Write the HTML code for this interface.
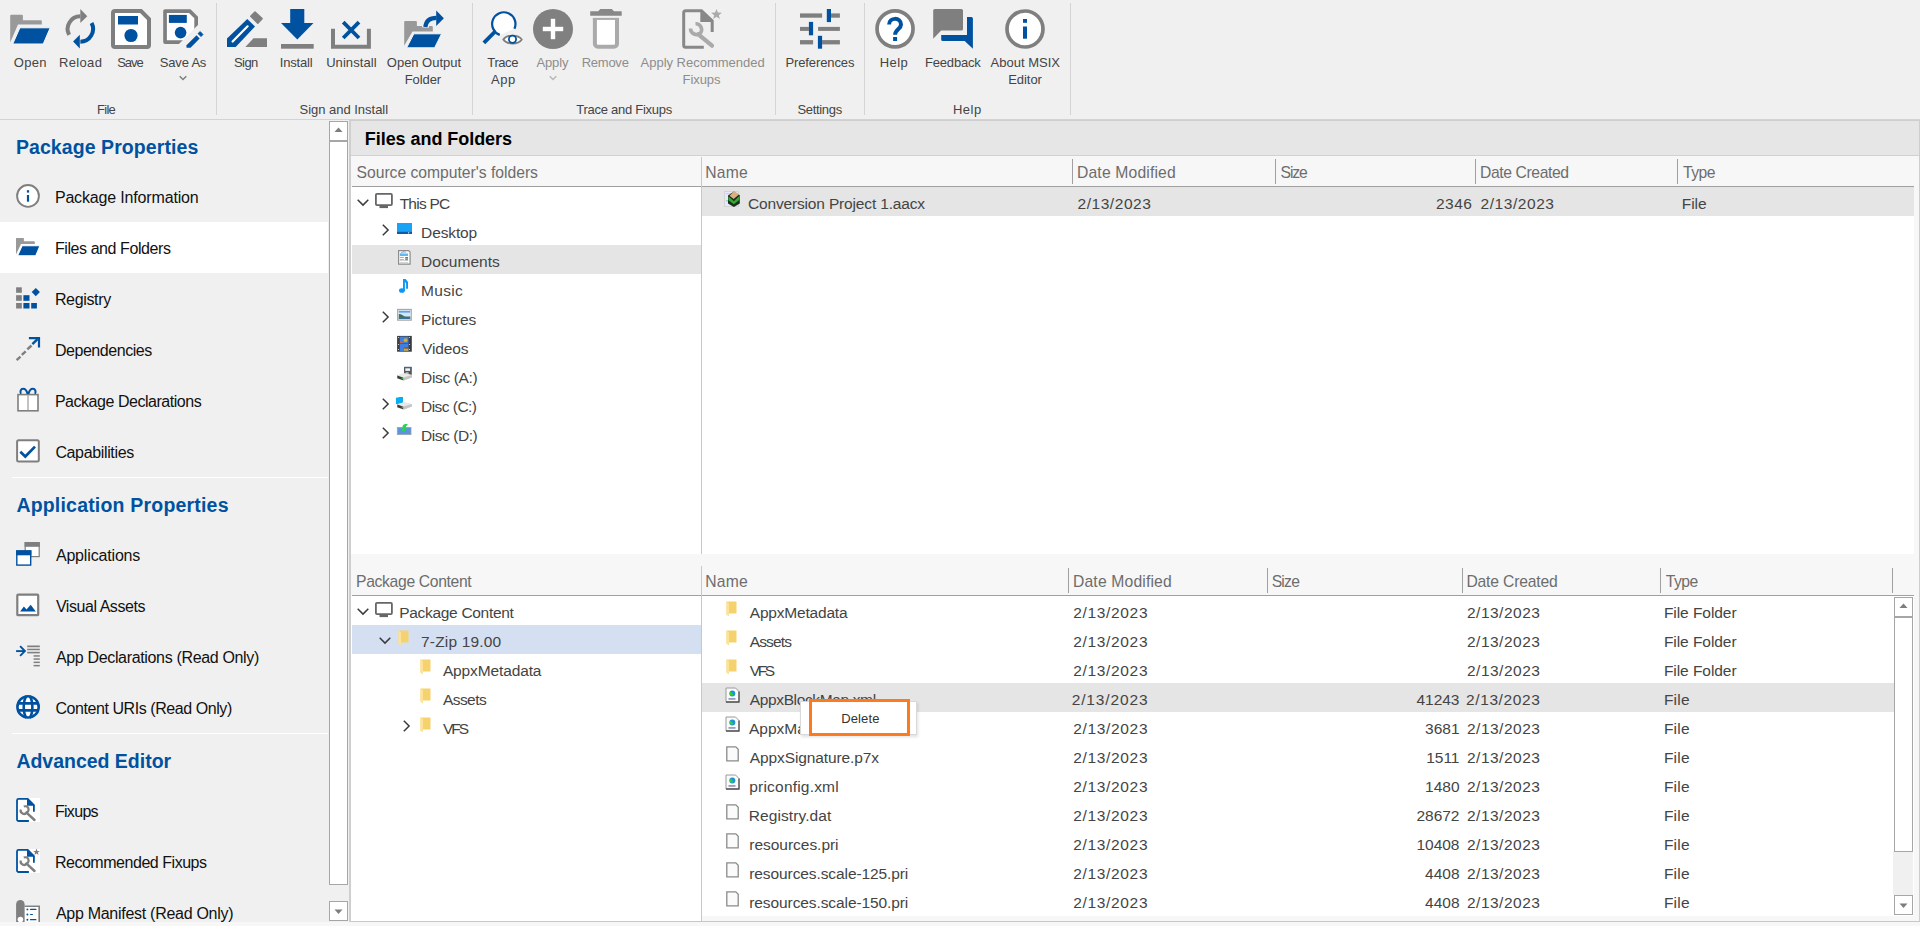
<!DOCTYPE html><html><head><meta charset="utf-8"><style>
html,body{margin:0;padding:0}
body{width:1920px;height:926px;overflow:hidden;position:relative;background:#f0f0f0;font-family:"Liberation Sans",sans-serif}
.t{position:absolute;white-space:nowrap;line-height:20px}
.r{position:absolute;display:block}
</style></head><body>
<div class="r" style="left:216px;top:3px;width:1px;height:112px;background:#d4d4d4;"></div>
<div class="r" style="left:472px;top:3px;width:1px;height:112px;background:#d4d4d4;"></div>
<div class="r" style="left:775px;top:3px;width:1px;height:112px;background:#d4d4d4;"></div>
<div class="r" style="left:864px;top:3px;width:1px;height:112px;background:#d4d4d4;"></div>
<div class="r" style="left:1070px;top:3px;width:1px;height:112px;background:#d4d4d4;"></div>
<div class="r" style="left:0px;top:119px;width:1920px;height:1px;background:#d3d3d3;"></div>
<div class="r" style="left:349px;top:120px;width:1571px;height:1px;background:#cecece;"></div>
<div class="t" id="t0" style="left:13.79px;top:53px;font-size:13px;color:#444;font-weight:normal;letter-spacing:0.333px;">Open</div>
<div class="t" id="t1" style="left:59.00px;top:53px;font-size:13px;color:#444;font-weight:normal;letter-spacing:0.340px;">Reload</div>
<div class="t" id="t2" style="left:117.22px;top:53px;font-size:13px;color:#444;font-weight:normal;letter-spacing:-1.033px;">Save</div>
<div class="t" id="t3" style="left:159.87px;top:53px;font-size:13px;color:#444;font-weight:normal;letter-spacing:-0.200px;">Save As</div>
<div class="t" id="t4" style="left:234.02px;top:53px;font-size:13px;color:#444;font-weight:normal;letter-spacing:-0.567px;">Sign</div>
<div class="t" id="t5" style="left:279.81px;top:53px;font-size:13px;color:#444;font-weight:normal;letter-spacing:-0.183px;">Install</div>
<div class="t" id="t6" style="left:326.13px;top:53px;font-size:13px;color:#444;font-weight:normal;letter-spacing:0.075px;">Uninstall</div>
<div class="t" id="t7" style="left:386.86px;top:53px;font-size:13px;color:#444;font-weight:normal;letter-spacing:-0.030px;">Open Output</div>
<div class="t" id="t8" style="left:404.74px;top:70px;font-size:13px;color:#444;font-weight:normal;letter-spacing:-0.080px;">Folder</div>
<div class="t" id="t9" style="left:487.36px;top:53px;font-size:13px;color:#444;font-weight:normal;letter-spacing:-0.425px;">Trace</div>
<div class="t" id="t10" style="left:491.11px;top:70px;font-size:13px;color:#444;font-weight:normal;letter-spacing:0.450px;">App</div>
<div class="t" id="t11" style="left:536.41px;top:53px;font-size:13px;color:#8d8d8d;font-weight:normal;letter-spacing:-0.100px;">Apply</div>
<div class="t" id="t12" style="left:581.66px;top:53px;font-size:13px;color:#8d8d8d;font-weight:normal;letter-spacing:-0.240px;">Remove</div>
<div class="t" id="t13" style="left:640.57px;top:53px;font-size:13px;color:#8d8d8d;font-weight:normal;letter-spacing:-0.012px;">Apply Recommended</div>
<div class="t" id="t14" style="left:682.62px;top:70px;font-size:13px;color:#8d8d8d;font-weight:normal;letter-spacing:-0.100px;">Fixups</div>
<div class="t" id="t15" style="left:785.38px;top:53px;font-size:13px;color:#444;font-weight:normal;letter-spacing:-0.100px;">Preferences</div>
<div class="t" id="t16" style="left:879.80px;top:53px;font-size:13px;color:#444;font-weight:normal;letter-spacing:0.433px;">Help</div>
<div class="t" id="t17" style="left:925.07px;top:53px;font-size:13px;color:#444;font-weight:normal;letter-spacing:-0.200px;">Feedback</div>
<div class="t" id="t18" style="left:990.49px;top:53px;font-size:13px;color:#444;font-weight:normal;letter-spacing:0.011px;">About MSIX</div>
<div class="t" id="t19" style="left:1008.16px;top:70px;font-size:13px;color:#444;font-weight:normal;letter-spacing:-0.040px;">Editor</div>
<div class="t" id="t20" style="left:96.97px;top:100px;font-size:13px;color:#444;font-weight:normal;letter-spacing:-0.700px;">File</div>
<div class="t" id="t21" style="left:299.52px;top:100px;font-size:13px;color:#444;font-weight:normal;letter-spacing:-0.020px;">Sign and Install</div>
<div class="t" id="t22" style="left:576.35px;top:100px;font-size:13px;color:#444;font-weight:normal;letter-spacing:-0.273px;">Trace and Fixups</div>
<div class="t" id="t23" style="left:797.43px;top:100px;font-size:13px;color:#444;font-weight:normal;letter-spacing:-0.314px;">Settings</div>
<div class="t" id="t24" style="left:952.90px;top:100px;font-size:13px;color:#444;font-weight:normal;letter-spacing:0.500px;">Help</div>
<svg class="r" style="left:179px;top:74.5px" width="8" height="6" viewBox="0 0 8 6"><path d="M0.7 1.2 L4 4.5 L7.3 1.2" fill="none" stroke="#808080" stroke-width="1.5"/></svg>
<svg class="r" style="left:549px;top:74.5px" width="8" height="6" viewBox="0 0 8 6"><path d="M0.7 1.2 L4 4.5 L7.3 1.2" fill="none" stroke="#b8b8b8" stroke-width="1.5"/></svg>
<svg class="r" style="left:6px;top:6px" width="50" height="46" viewBox="0 0 50 46"><path d="M4.2 9.8 Q4.2 8.8 5.2 8.8 H15.9 Q16.9 8.8 16.9 9.8 V14.2 H34.8 Q35.8 14.2 35.8 15.2 V18.6 H12 L4.2 36.5 Z" fill="#999"/>
<path d="M13.9 21.8 H44.2 L37.2 38 H6.7 Z" fill="#0052a0" stroke="#f7f7f7" stroke-width="1" stroke-linejoin="round"/></svg>
<svg class="r" style="left:56px;top:6px" width="50" height="46" viewBox="0 0 50 46"><path d="M13.14 28.91 A12.7 12.7 0 0 1 24.35 10.25" fill="none" stroke="#7f7f7f" stroke-width="4"/>
<path d="M24.3 3 L31.3 10.2 L24.3 17.1 Z" fill="#7f7f7f"/>
<path d="M35.56 16.99 A12.7 12.7 0 0 1 24.35 35.65" fill="none" stroke="#0052a0" stroke-width="4"/>
<path d="M23.8 28.8 L17.1 35.5 L23.8 42.5 Z" fill="#0052a0"/></svg>
<svg class="r" style="left:111px;top:9px" width="40" height="40" viewBox="0 0 40 40"><path d="M4 2 H30 L38 10 V36 A2 2 0 0 1 36 38 H4 A2 2 0 0 1 2 36 V4 A2 2 0 0 1 4 2 Z" fill="#fff" stroke="#7f7f7f" stroke-width="4"/>
<rect x="7" y="7" width="20" height="8.5" fill="#0052a0"/>
<circle cx="20" cy="26.5" r="6.6" fill="#0052a0"/></svg>
<svg class="r" style="left:158px;top:6px" width="50" height="46" viewBox="0 0 50 46"><path d="M7.1 3.2 H32.5 L40 10.7 V21.4 L25 36 L23.8 38 H7.1 A1.9 1.9 0 0 1 5.2 36.1 V5.1 A1.9 1.9 0 0 1 7.1 3.2 Z" fill="#7f7f7f"/>
<path d="M8.9 6.9 H31 L36.3 12.2 V24.6 L27 34.3 H8.9 Z" fill="#fff"/>
<path d="M21 41 L47 15" stroke="#f0f0f0" stroke-width="4.5"/>
<rect x="10.9" y="8.9" width="17.9" height="8" fill="#0052a0"/>
<circle cx="22.6" cy="26.6" r="5.8" fill="#0052a0"/>
<path d="M28.5 39.2 V41.7 H32.5 L41.7 32.5 L38.5 29.3 Z" fill="#0052a0"/>
<path d="M40 27.6 L42.2 25.6 L45 28.5 L43 30.6 Z" fill="#0052a0" stroke="#0052a0" stroke-width="0.8" stroke-linejoin="round"/></svg>
<svg class="r" style="left:222px;top:6px" width="50" height="46" viewBox="0 0 50 46"><path d="M5 41 V32.5 L25.3 13 L33 20.6 L13.7 41 Z" fill="#0052a0"/>
<path d="M10.6 35.5 L25.6 20.3" stroke="#fff" stroke-width="2.2" stroke-linecap="round"/>
<path d="M33 6 L40 12.7 L35.8 17.2 L28.8 10.3 Z" fill="#7f7f7f" stroke="#7f7f7f" stroke-width="1.6" stroke-linejoin="round"/>
<path d="M23.3 41 H45 V32.2 H31.5 Z" fill="#7f7f7f"/></svg>
<svg class="r" style="left:276px;top:6px" width="50" height="46" viewBox="0 0 50 46"><rect x="14.2" y="3" width="14.1" height="14.2" fill="#0052a0"/>
<path d="M5 17.1 H37.5 L21.3 33.4 Z" fill="#0052a0"/>
<rect x="5" y="38" width="32.7" height="4.7" fill="#7f7f7f"/></svg>
<svg class="r" style="left:326px;top:6px" width="50" height="46" viewBox="0 0 50 46"><path d="M7 22.8 V40.7 H42.9 V22.8" fill="none" stroke="#7f7f7f" stroke-width="4"/>
<path d="M17.2 16.2 L33 32 M33 16.2 L17.2 32" stroke="#0052a0" stroke-width="3.8"/></svg>
<svg class="r" style="left:400px;top:6px" width="50" height="46" viewBox="0 0 50 46"><path d="M4.2 16.1 Q4.2 15.1 5.2 15.1 H15.9 Q16.9 15.1 16.9 16.1 V20.1 H31.8 Q32.8 20.1 32.8 21.1 V25.6 H12.5 L4.2 39.7 Z" fill="#999"/>
<path d="M25.3 21.5 C26 14.5 30 11.8 36.5 11.8" fill="none" stroke="#f0f0f0" stroke-width="7"/>
<path d="M13.8 27.8 H41.6 L34.6 41.8 H6.6 Z" fill="#0052a0" stroke="#f7f7f7" stroke-width="1" stroke-linejoin="round"/>
<path d="M25.3 21 C26 14.5 30 11.8 36.5 11.8" fill="none" stroke="#0052a0" stroke-width="4.2"/>
<path d="M36.2 4.5 L43.9 12.2 L36.2 19.9 Z" fill="#0052a0"/></svg>
<svg class="r" style="left:478px;top:6px" width="50" height="46" viewBox="0 0 50 46"><path d="M36.4 22.8 A11.65 11.65 0 1 0 21.8 28.9" fill="#fff" stroke="#0052a0" stroke-width="2.2"/>
<path d="M15.5 27.2 L7.2 35.6" stroke="#0052a0" stroke-width="3.8" stroke-linecap="square"/>
<path d="M25.3 33.5 C28.5 28.2 40.5 28.2 43.7 33.5 C40.5 38.8 28.5 38.8 25.3 33.5 Z" fill="#fff" stroke="#7f7f7f" stroke-width="1.8"/>
<circle cx="34.5" cy="33.3" r="3.6" fill="#fff" stroke="#0052a0" stroke-width="1.8"/></svg>
<svg class="r" style="left:533px;top:9px" width="40" height="40" viewBox="0 0 40 40"><circle cx="20" cy="20" r="20" fill="#808080"/>
<rect x="9.8" y="17.8" width="20.4" height="4.4" fill="#fff"/>
<rect x="17.8" y="9.8" width="4.4" height="20.4" fill="#fff"/></svg>
<svg class="r" style="left:581px;top:6px" width="50" height="46" viewBox="0 0 50 46"><path d="M9.2 5.2 H17.1 L19.4 3 H30.8 L33 5.2 H40.7 V9.7 H9.2 Z" fill="#888"/>
<path d="M13.9 11.9 V37.7 A3 3 0 0 0 16.9 40.7 H33 A3 3 0 0 0 36 37.7 V11.9" fill="#fff" stroke="#aaa" stroke-width="4"/>
<rect x="11.9" y="11.9" width="26.1" height="2" fill="#aaa"/></svg>
<svg class="r" style="left:677px;top:6px" width="50" height="46" viewBox="0 0 50 46"><path d="M26.8 41.2 H8.7 A2 2 0 0 1 6.7 39.2 V6.7 A2 2 0 0 1 8.7 4.7 H24.5 L35.2 15 V26.1" fill="none" stroke="#888" stroke-width="3"/>
<path d="M23.3 4 V15.9 H36 Z" fill="#888"/>
<path d="M21.4 28.3 L35 39.7" stroke="#aaa" stroke-width="4.2" stroke-linecap="round"/>
<path d="M13.5 22.5 A6 6 0 0 0 23.5 27 A5.8 5.8 0 0 0 18.5 17.8" fill="none" stroke="#aaa" stroke-width="3.6"/>
<path d="M39.5 2.9 L40.9 6.6 L44.9 6.7 L41.8 9.2 L42.9 13 L39.5 10.8 L36.1 13 L37.2 9.2 L34.1 6.7 L38.1 6.6 Z" fill="#aaa"/></svg>
<svg class="r" style="left:795px;top:6px" width="50" height="46" viewBox="0 0 50 46"><g fill="#7f7f7f"><rect x="5" y="7.4" width="22.1" height="4.3"/><rect x="36" y="7.4" width="8.9" height="4.3"/>
<rect x="5" y="20.9" width="8.9" height="4"/><rect x="23.1" y="20.9" width="21.8" height="4"/>
<rect x="5" y="34.1" width="13.1" height="4.3"/><rect x="27.1" y="34.1" width="17.8" height="4.3"/></g>
<g fill="#0052a0"><rect x="31.8" y="3" width="4.2" height="13.1"/><rect x="13.9" y="15.9" width="4.2" height="13.4"/><rect x="22.9" y="29.8" width="4.2" height="12.9"/></g></svg>
<svg class="r" style="left:870px;top:6px" width="50" height="46" viewBox="0 0 50 46"><circle cx="25.05" cy="22.85" r="18" fill="#fff" stroke="#7f7f7f" stroke-width="3.7"/>
<path d="M19.1 18.6 C19.1 11 31 11 31 18.4 C31 23.2 25.1 23.5 25.1 28.8" fill="none" stroke="#0052a0" stroke-width="4"/>
<rect x="23.1" y="31" width="4" height="4" fill="#0052a0"/></svg>
<svg class="r" style="left:928px;top:6px" width="50" height="46" viewBox="0 0 50 46"><path d="M6.7 3 H33.5 A1.5 1.5 0 0 1 35 4.5 V23.1 A1.5 1.5 0 0 1 33.5 24.6 H13.2 L5.2 32.8 V4.5 A1.5 1.5 0 0 1 6.7 3 Z" fill="#7f7f7f"/>
<path d="M39 10.9 H43.4 A1.5 1.5 0 0 1 44.9 12.4 V42.7 L36.7 35 H14.7 A1.5 1.5 0 0 1 13.2 33.5 V29 H39 Z" fill="#0052a0"/></svg>
<svg class="r" style="left:1005px;top:9px" width="40" height="40" viewBox="0 0 40 40"><circle cx="20" cy="20" r="18" fill="#fff" stroke="#7f7f7f" stroke-width="3.7"/>
<rect x="18" y="10" width="4" height="3.8" fill="#0052a0"/>
<rect x="18" y="17.5" width="4" height="12.2" fill="#0052a0"/></svg>
<div class="r" style="left:0px;top:222px;width:328px;height:51px;background:#fff;"></div>
<div class="r" style="left:12px;top:477px;width:316px;height:1px;background:#fff;"></div>
<div class="r" style="left:12px;top:733px;width:316px;height:1px;background:#fff;"></div>
<div class="t" id="t25" style="left:15.88px;top:137px;font-size:19.5px;color:#0052a0;font-weight:bold;letter-spacing:0.082px;">Package Properties</div>
<div class="t" id="t26" style="left:16.38px;top:495px;font-size:19.5px;color:#0052a0;font-weight:bold;letter-spacing:0.195px;">Application Properties</div>
<div class="t" id="t27" style="left:16.38px;top:751px;font-size:19.5px;color:#0052a0;font-weight:bold;letter-spacing:-0.014px;">Advanced Editor</div>
<div class="t" id="t28" style="left:54.88px;top:188px;font-size:16px;color:#111;font-weight:normal;letter-spacing:-0.161px;">Package Information</div>
<div class="t" id="t29" style="left:54.88px;top:239px;font-size:16px;color:#111;font-weight:normal;letter-spacing:-0.412px;">Files and Folders</div>
<div class="t" id="t30" style="left:54.88px;top:290px;font-size:16px;color:#111;font-weight:normal;letter-spacing:-0.343px;">Registry</div>
<div class="t" id="t31" style="left:54.88px;top:341px;font-size:16px;color:#111;font-weight:normal;letter-spacing:-0.445px;">Dependencies</div>
<div class="t" id="t32" style="left:54.88px;top:392px;font-size:16px;color:#111;font-weight:normal;letter-spacing:-0.463px;">Package Declarations</div>
<div class="t" id="t33" style="left:55.38px;top:443px;font-size:16px;color:#111;font-weight:normal;letter-spacing:-0.355px;">Capabilities</div>
<div class="t" id="t34" style="left:55.88px;top:546px;font-size:16px;color:#111;font-weight:normal;letter-spacing:-0.164px;">Applications</div>
<div class="t" id="t35" style="left:55.88px;top:597px;font-size:16px;color:#111;font-weight:normal;letter-spacing:-0.442px;">Visual Assets</div>
<div class="t" id="t36" style="left:55.88px;top:648px;font-size:16px;color:#111;font-weight:normal;letter-spacing:-0.337px;">App Declarations (Read Only)</div>
<div class="t" id="t37" style="left:55.38px;top:699px;font-size:16px;color:#111;font-weight:normal;letter-spacing:-0.430px;">Content URIs (Read Only)</div>
<div class="t" id="t38" style="left:54.88px;top:802px;font-size:16px;color:#111;font-weight:normal;letter-spacing:-0.680px;">Fixups</div>
<div class="t" id="t39" style="left:54.88px;top:853px;font-size:16px;color:#111;font-weight:normal;letter-spacing:-0.465px;">Recommended Fixups</div>
<div class="t" id="t40" style="left:55.88px;top:904px;font-size:16px;color:#111;font-weight:normal;letter-spacing:-0.278px;">App Manifest (Read Only)</div>
<svg class="r" style="left:12px;top:181px" width="32" height="32" viewBox="0 0 32 32"><circle cx="16" cy="14.95" r="10.9" fill="#fff" stroke="#7f7f7f" stroke-width="1.9"/><rect x="14.9" y="9.2" width="2.2" height="2.4" fill="#0052a0"/><rect x="14.9" y="14" width="2.2" height="6.7" fill="#0052a0"/></svg>
<svg class="r" style="left:12px;top:232px" width="32" height="32" viewBox="0 0 32 32"><path d="M4 6.5 Q4 6 4.5 6 H11.4 Q11.9 6 11.9 6.5 V9.2 H22.3 Q22.8 9.2 22.8 9.7 V12.1 H9 L4 22.6 Z" fill="#999"/><path d="M10 13.8 H28 L23.8 23.8 H5.5 Z" fill="#0052a0" stroke="#fff" stroke-width="1.1" stroke-linejoin="round"/></svg>
<svg class="r" style="left:12px;top:284px" width="32" height="32" viewBox="0 0 32 32"><g fill="#7f7f7f"><rect x="4.1" y="3.3" width="5.7" height="5.5"/><rect x="4.1" y="11.2" width="5.7" height="5.6"/><rect x="4.1" y="19" width="5.7" height="5.5"/></g><g fill="#0052a0"><rect x="11.4" y="11.2" width="6.1" height="5.6"/><rect x="11.4" y="19" width="6.1" height="5.5"/><rect x="19.2" y="19" width="5.7" height="5.5"/><path d="M23.8 4 L27.9 8.1 L23.8 12.2 L19.7 8.1 Z"/></g></svg>
<svg class="r" style="left:12px;top:334px" width="32" height="32" viewBox="0 0 32 32"><g stroke="#7f7f7f" stroke-width="2.4"><path d="M4.6 26.1 L8.5 22.6"/><path d="M9.8 20.9 L13.7 17.4"/><path d="M15.3 15.4 L19.5 11.5"/></g><path d="M20.4 10.2 L25.5 5.2" stroke="#0052a0" stroke-width="2.4"/><path d="M16.9 4.1 H27 V13.6" fill="none" stroke="#0052a0" stroke-width="2.2"/></svg>
<svg class="r" style="left:12px;top:385px" width="32" height="32" viewBox="0 0 32 32"><rect x="6" y="9.6" width="20" height="16.2" fill="#fff" stroke="#7f7f7f" stroke-width="1.6"/><rect x="15.3" y="10.2" width="1.4" height="15" fill="#aaa"/><path d="M15.6 9 C14.5 5 13.5 3.8 11.2 3.8 C8.5 3.8 7.8 6.8 9 8.8 M16.4 9 C17.5 5 18.5 3.8 20.8 3.8 C23.5 3.8 24.2 6.8 23 8.8" fill="none" stroke="#0052a0" stroke-width="2"/></svg>
<svg class="r" style="left:12px;top:436px" width="32" height="32" viewBox="0 0 32 32"><rect x="5.1" y="4.3" width="21.7" height="21.3" rx="1.5" fill="#fff" stroke="#7f7f7f" stroke-width="2"/><path d="M8.3 15.8 L13.3 20.5 L23 10.6" fill="none" stroke="#0052a0" stroke-width="2.7"/></svg>
<svg class="r" style="left:12px;top:538px" width="32" height="32" viewBox="0 0 32 32"><rect x="13.2" y="4.7" width="14" height="13.9" fill="#fff" stroke="#7f7f7f" stroke-width="1.2"/><rect x="12.6" y="4.1" width="15.2" height="4.7" fill="#7f7f7f"/><rect x="4.8" y="13" width="13.9" height="14.1" fill="#fff" stroke="#0052a0" stroke-width="1.4"/><rect x="4.1" y="12.3" width="15.3" height="5" fill="#0052a0"/></svg>
<svg class="r" style="left:12px;top:589px" width="32" height="32" viewBox="0 0 32 32"><rect x="5.3" y="5.6" width="20.9" height="20.6" rx="0.8" fill="#fff" stroke="#7f7f7f" stroke-width="2.2"/><path d="M8.1 22.6 L11.9 17.6 L14.5 20.6 L18.7 15.7 L23.8 22.6 Z" fill="#0052a0"/></svg>
<svg class="r" style="left:12px;top:640px" width="32" height="32" viewBox="0 0 32 32"><path d="M4.1 11.1 H12.6" stroke="#0052a0" stroke-width="1.9"/><path d="M8.1 6.2 L12.9 11.1 L8.1 15.9" fill="none" stroke="#0052a0" stroke-width="1.9"/><g fill="#7f7f7f"><rect x="15.2" y="5.5" width="12.6" height="1.5"/><rect x="15.2" y="8.6" width="12.6" height="1.5"/><rect x="15.2" y="11.9" width="12.6" height="1.5"/><rect x="21.6" y="15.2" width="6.2" height="1.5"/><rect x="21.6" y="18.3" width="6.2" height="1.5"/><rect x="21.6" y="21.6" width="6.2" height="1.5"/><rect x="21.6" y="24.9" width="6.2" height="1.5"/></g><g fill="#d6d6d6"><rect x="15.2" y="7" width="12.6" height="1.6"/><rect x="15.2" y="10.1" width="12.6" height="1.8"/></g></svg>
<svg class="r" style="left:12px;top:691px" width="32" height="32" viewBox="0 0 32 32"><circle cx="16.05" cy="15.9" r="10.65" fill="#fff" stroke="#0052a0" stroke-width="2.6"/><path d="M5 12.35 H27 M5 19.45 H27" stroke="#0052a0" stroke-width="2.8"/><path d="M14.5 5 C10.8 10 10.8 22 14.5 27 M17.6 5 C21.3 10 21.3 22 17.6 27" fill="none" stroke="#0052a0" stroke-width="2.6"/></svg>
<svg class="r" style="left:12px;top:793px" width="32" height="32" viewBox="0 0 32 32"><rect x="4.1" y="5" width="23.9" height="23.9" fill="#fff"/><path d="M16.9 28 H6.5 A1.5 1.5 0 0 1 5 26.5 V7.4 A1.5 1.5 0 0 1 6.5 5.9 H15.7 L21.9 12.1 V18.8" fill="none" stroke="#0052a0" stroke-width="1.8"/><path d="M15 5 V12.8 H22.8 Z" fill="#0052a0"/><path d="M14.5 19.7 L22.5 27" stroke="#7f7f7f" stroke-width="2.5" stroke-linecap="round"/><path d="M8.8 16.5 A3.4 3.4 0 0 0 14.8 19.5 A3.3 3.3 0 0 0 11.8 13.6" fill="none" stroke="#7f7f7f" stroke-width="2.2"/></svg>
<svg class="r" style="left:12px;top:844px" width="32" height="32" viewBox="0 0 32 32"><rect x="4.1" y="5" width="23.9" height="23.9" fill="#fff"/><path d="M16.9 28 H6.5 A1.5 1.5 0 0 1 5 26.5 V7.4 A1.5 1.5 0 0 1 6.5 5.9 H15.7 L21.9 12.1 V18.8" fill="none" stroke="#0052a0" stroke-width="1.8"/><path d="M15 5 V12.8 H22.8 Z" fill="#0052a0"/><path d="M14.5 19.7 L22.5 27" stroke="#7f7f7f" stroke-width="2.5" stroke-linecap="round"/><path d="M8.8 16.5 A3.4 3.4 0 0 0 14.8 19.5 A3.3 3.3 0 0 0 11.8 13.6" fill="none" stroke="#7f7f7f" stroke-width="2.2"/><path d="M24.5 4.6 L25.4 6.9 L27.8 7 L25.9 8.5 L26.6 10.9 L24.5 9.6 L22.4 10.9 L23.1 8.5 L21.2 7 L23.6 6.9 Z" fill="#7f7f7f"/></svg>
<svg class="r" style="left:12px;top:890px" width="36" height="36" viewBox="0 0 36 36"><path d="M12.6 15.4 H28 V36 H12.6 Z" fill="#fff"/><path d="M12.6 16.2 H27.2 V36" fill="none" stroke="#7f7f7f" stroke-width="1.6"/><path d="M4.1 36 V14.2 A4.25 4.25 0 0 1 12.6 14.2 V36 Z" fill="#7f7f7f"/><circle cx="8.4" cy="29.5" r="2.8" fill="#fff"/><g fill="#0052a0"><circle cx="15.4" cy="19.4" r="0.95"/><circle cx="15.4" cy="24.5" r="0.95"/><circle cx="15.4" cy="29.7" r="0.95"/><rect x="17.9" y="18.8" width="6.6" height="1.2" rx="0.6"/><rect x="17.9" y="23.9" width="3.1" height="1.2" rx="0.6"/><rect x="17.9" y="29.1" width="6.6" height="1.2" rx="0.6"/></g></svg>
<div class="r" style="left:328px;top:884px;width:20px;height:17px;background:#f0f0f0;"></div>
<div class="r" style="left:329px;top:121px;width:17px;height:762px;background:#fff;border:1px solid #a6a6a6"></div>
<div class="r" style="left:329px;top:140px;width:19px;height:2px;background:#a6a6a6;"></div>
<div class="r" style="left:329px;top:901px;width:17px;height:18px;background:#fff;border:1px solid #a6a6a6"></div>
<svg class="r" style="left:334px;top:127px" width="9" height="6" viewBox="0 0 9 6"><path d="M0.5 5 L4.5 0.5 L8.5 5 Z" fill="#7d7d7d"/></svg>
<svg class="r" style="left:334px;top:909px" width="9" height="6" viewBox="0 0 9 6"><path d="M0.5 0.5 L4.5 5 L8.5 0.5 Z" fill="#7d7d7d"/></svg>
<div class="r" style="left:349px;top:120px;width:2px;height:802px;background:#cfcfcf;"></div>
<div class="r" style="left:351px;top:121px;width:1568px;height:34px;background:#e6e6e6;"></div>
<div class="r" style="left:351px;top:155px;width:1568px;height:1px;background:#d2d2d2;"></div>
<div class="r" style="left:1919px;top:121px;width:1px;height:801px;background:#cdcdcd;"></div>
<div class="r" style="left:351px;top:921px;width:1569px;height:1px;background:#c8c8c8;"></div>
<div class="r" style="left:0px;top:922px;width:1920px;height:4px;background:#f7f7f7;"></div>
<div class="t" id="t41" style="left:364.79px;top:129px;font-size:18px;color:#000;font-weight:bold;letter-spacing:-0.050px;">Files and Folders</div>
<div class="r" style="left:351px;top:156px;width:1568px;height:31px;background:#f7f7f7;"></div>
<div class="r" style="left:351px;top:187px;width:1563px;height:367px;background:#fff;"></div>
<div class="r" style="left:1914px;top:187px;width:5px;height:367px;background:#f7f7f7;"></div>
<div class="r" style="left:352px;top:186px;width:1562px;height:1px;background:#a0a0a0;"></div>
<div class="r" style="left:701px;top:157px;width:1px;height:397px;background:#c8c8c8;"></div>
<div class="t" id="t42" style="left:356.50px;top:163px;font-size:15.7px;color:#6d6d6d;font-weight:normal;letter-spacing:-0.012px;">Source computer's folders</div>
<div class="t" id="t43" style="left:705.29px;top:163px;font-size:15.7px;color:#6d6d6d;font-weight:normal;letter-spacing:0.167px;">Name</div>
<div class="r" style="left:1072px;top:159px;width:1px;height:25px;background:#a0a0a0;"></div>
<div class="t" id="t44" style="left:1077.00px;top:163px;font-size:15.7px;color:#6d6d6d;font-weight:normal;letter-spacing:0.158px;">Date Modified</div>
<div class="r" style="left:1275px;top:159px;width:1px;height:25px;background:#a0a0a0;"></div>
<div class="t" id="t45" style="left:1280.59px;top:163px;font-size:15.7px;color:#6d6d6d;font-weight:normal;letter-spacing:-1.100px;">Size</div>
<div class="r" style="left:1475px;top:159px;width:1px;height:25px;background:#a0a0a0;"></div>
<div class="t" id="t46" style="left:1480.09px;top:163px;font-size:15.7px;color:#6d6d6d;font-weight:normal;letter-spacing:-0.400px;">Date Created</div>
<div class="r" style="left:1677px;top:159px;width:1px;height:25px;background:#a0a0a0;"></div>
<div class="t" id="t47" style="left:1683.00px;top:163px;font-size:15.7px;color:#6d6d6d;font-weight:normal;letter-spacing:-0.500px;">Type</div>
<div class="r" style="left:702px;top:187px;width:1212px;height:29px;background:#e5e5e5;"></div>
<div class="t" id="t48" style="left:748.00px;top:194px;font-size:15.5px;color:#444;font-weight:normal;letter-spacing:-0.162px;">Conversion Project 1.aacx</div>
<div class="t" id="t49" style="left:1077.50px;top:194px;font-size:15.5px;color:#444;font-weight:normal;letter-spacing:0.550px;">2/13/2023</div>
<div class="t" id="t50" style="left:1436.02px;top:194px;font-size:15.5px;color:#444;font-weight:normal;letter-spacing:0.467px;">2346</div>
<div class="t" id="t51" style="left:1480.59px;top:194px;font-size:15.5px;color:#444;font-weight:normal;letter-spacing:0.550px;">2/13/2023</div>
<div class="t" id="t52" style="left:1681.79px;top:194px;font-size:15.5px;color:#444;font-weight:normal;letter-spacing:-0.067px;">File</div>
<svg class="r" style="left:718px;top:186px" width="30" height="30" viewBox="0 0 30 30"><rect x="6.5" y="5.4" width="14" height="15" fill="#e9e7fb" stroke="#cfcfcf" stroke-width="0.8"/><rect x="8" y="7" width="6" height="1.2" fill="#d0ccf5"/><rect x="8" y="14" width="3" height="1.5" fill="#8fd6d6"/><path d="M10 9.5 L16 5.5 L21.8 9.2 V17.5 L15.9 21 L10 17.5 Z" fill="#1c2e1c"/><path d="M10.4 10.3 L15.9 15.2 L21.5 9.8 V13.8 L15.9 18.2 L10.4 14.2 Z" fill="#33a833"/><path d="M16.2 4.9 L21 8.4 L15.6 13 L11.6 9.7 Z" fill="#dcae80"/></svg>
<div class="r" style="left:352px;top:245px;width:349px;height:29px;background:#e5e5e5;"></div>
<svg class="r" style="left:357px;top:199px" width="12" height="8" viewBox="0 0 12 8"><path d="M0.7 0.8 L6 6.1 L11.3 0.8" fill="none" stroke="#3a3a3a" stroke-width="1.5"/></svg>
<svg class="r" style="left:375px;top:193px" width="18" height="16" viewBox="0 0 18 16"><rect x="0.9" y="0.9" width="16" height="11.2" rx="1" fill="#fff" stroke="#666" stroke-width="1.8"/><rect x="4.5" y="12.5" width="8.5" height="2.6" fill="#666"/></svg>
<div class="t" id="t53" style="left:399.68px;top:194px;font-size:15.5px;color:#444;font-weight:normal;letter-spacing:-0.767px;">This PC</div>
<svg class="r" style="left:381.5px;top:224px" width="8" height="12" viewBox="0 0 8 12"><path d="M0.8 0.7 L6.1 6 L0.8 11.3" fill="none" stroke="#3a3a3a" stroke-width="1.5"/></svg>
<div class="t" id="t54" style="left:421.08px;top:223px;font-size:15.5px;color:#444;font-weight:normal;letter-spacing:-0.117px;">Desktop</div>
<div class="t" id="t55" style="left:421.08px;top:252px;font-size:15.5px;color:#444;font-weight:normal;letter-spacing:0.050px;">Documents</div>
<div class="t" id="t56" style="left:421.08px;top:281px;font-size:15.5px;color:#444;font-weight:normal;letter-spacing:0.300px;">Music</div>
<svg class="r" style="left:381.5px;top:311px" width="8" height="12" viewBox="0 0 8 12"><path d="M0.8 0.7 L6.1 6 L0.8 11.3" fill="none" stroke="#3a3a3a" stroke-width="1.5"/></svg>
<div class="t" id="t57" style="left:421.08px;top:310px;font-size:15.5px;color:#444;font-weight:normal;letter-spacing:-0.129px;">Pictures</div>
<div class="t" id="t58" style="left:422.08px;top:339px;font-size:15.5px;color:#444;font-weight:normal;letter-spacing:-0.160px;">Videos</div>
<div class="t" id="t59" style="left:421.08px;top:368px;font-size:15.5px;color:#444;font-weight:normal;letter-spacing:-0.350px;">Disc (A:)</div>
<svg class="r" style="left:381.5px;top:398px" width="8" height="12" viewBox="0 0 8 12"><path d="M0.8 0.7 L6.1 6 L0.8 11.3" fill="none" stroke="#3a3a3a" stroke-width="1.5"/></svg>
<div class="t" id="t60" style="left:421.08px;top:397px;font-size:15.5px;color:#444;font-weight:normal;letter-spacing:-0.550px;">Disc (C:)</div>
<svg class="r" style="left:381.5px;top:427px" width="8" height="12" viewBox="0 0 8 12"><path d="M0.8 0.7 L6.1 6 L0.8 11.3" fill="none" stroke="#3a3a3a" stroke-width="1.5"/></svg>
<div class="t" id="t61" style="left:421.08px;top:426px;font-size:15.5px;color:#444;font-weight:normal;letter-spacing:-0.462px;">Disc (D:)</div>
<svg class="r" style="left:397px;top:223px" width="15" height="11" viewBox="0 0 15 11"><rect x="0" y="0" width="15" height="11" fill="#1aa3f5"/><rect x="0" y="8.8" width="15" height="2.2" fill="#0a5ea8"/><rect x="11" y="9.4" width="1.2" height="1" fill="#fff"/></svg>
<svg class="r" style="left:394px;top:247px" width="22" height="22" viewBox="0 0 22 22"><path d="M4.6 3.6 H14.6 L16.1 5.1 V17.1 H4.6 Z" fill="#fdfdfd" stroke="#8c8c8c" stroke-width="1.2"/><rect x="5.9" y="6.5" width="8.1" height="2.5" fill="#63b6ee"/><path d="M6.8 6.6 C7.4 4.9 9.8 4.6 11.8 5.2" fill="none" stroke="#4aa8ea" stroke-width="1"/><g fill="#9a9a9a"><rect x="6" y="10" width="3.8" height="0.8"/><rect x="6" y="12" width="3.8" height="0.7"/></g><g fill="#c4c4c4"><rect x="6" y="13.2" width="8" height="0.7"/><rect x="6" y="15.2" width="8" height="0.7"/></g><rect x="11.2" y="10" width="2.8" height="1.4" fill="#3d7de0"/><rect x="11.2" y="11.4" width="2.8" height="1.8" fill="#6a9f78"/></svg>
<svg class="r" style="left:394px;top:274px" width="22" height="22" viewBox="0 0 22 22"><g fill="#0a98f5"><rect x="9" y="5" width="1.9" height="12"/><path d="M9 5 H11.6 L14 8 V14.7 H12.1 V9.4 L10.6 7.6 Z"/><ellipse cx="7.9" cy="16.5" rx="2.9" ry="2.3"/></g></svg>
<svg class="r" style="left:394px;top:303px" width="22" height="22" viewBox="0 0 22 22"><rect x="3.7" y="6.5" width="13.5" height="10.6" fill="#fff" stroke="#a8a8a8" stroke-width="1.3"/><rect x="4.8" y="7.8" width="11.4" height="8.1" fill="#d2e7fb"/><rect x="4.8" y="7.8" width="11.4" height="1.8" fill="#5f9ef2"/><path d="M4.8 11 C6.8 10.6 8.5 12.4 10.2 13.2 C12 13.6 14 13.4 16.2 13.6 V15.9 H4.8 Z" fill="#3f7150"/><rect x="4.8" y="14.2" width="11.4" height="1.7" fill="#3b6fc0" opacity="0.75"/></svg>
<svg class="r" style="left:394px;top:332px" width="22" height="22" viewBox="0 0 22 22"><rect x="3.1" y="3.9" width="14.7" height="15.8" fill="#3c3c3c"/><rect x="5.7" y="4.6" width="8.8" height="6.9" fill="#3f7fe0"/><rect x="5.7" y="11.9" width="8.8" height="7.1" fill="#3f7fe0"/><circle cx="11.6" cy="8.2" r="1.9" fill="#cfae22"/><rect x="6" y="9.5" width="2.5" height="1.6" fill="#e05a40"/><rect x="10" y="16.2" width="4.3" height="2.5" fill="#d4ae20"/><rect x="10.2" y="15.6" width="3.8" height="0.9" fill="#9a2222"/><g fill="#eee"><rect x="4" y="5" width="0.9" height="0.9"/><rect x="4" y="12" width="0.9" height="0.9"/><rect x="4" y="17.1" width="0.9" height="0.9"/><rect x="15.1" y="5" width="0.9" height="0.9"/><rect x="15.1" y="12" width="0.9" height="0.9"/><rect x="15.1" y="17.1" width="0.9" height="0.9"/></g></svg>
<svg class="r" style="left:394px;top:361px" width="22" height="22" viewBox="0 0 22 22"><rect x="10" y="5.9" width="7.8" height="8" fill="#555"/><rect x="10.6" y="5.9" width="6.6" height="1.4" fill="#1a6fd0"/><rect x="11.3" y="7.3" width="4.8" height="2.6" fill="#f3f3f3"/><rect x="11.6" y="11.2" width="3" height="2.7" fill="#bbb"/><path d="M3.1 14.2 L10 12.2 L17.8 14 V16.6 L9.6 19.7 L3.1 17.6 Z" fill="#dadada"/><path d="M10 12.2 L17.8 14 V16.6 L9.6 19.2 L9.4 16.6 L3.1 14.2 Z" fill="#e8e8e8"/><path d="M3.3 14.5 L9.3 16.7 V19.3 L3.3 17.2 Z" fill="#3a3a3a"/><path d="M9.4 16.6 L17.8 14 V16.6 L9.6 19.6 Z" fill="#c4c4c4"/><rect x="7.6" y="17" width="1.7" height="1.1" fill="#2fb52f"/></svg>
<svg class="r" style="left:394px;top:390px" width="22" height="22" viewBox="0 0 22 22"><path d="M1.9 7.8 L5 7.3 V6.9 L9 6.9 V14.3 L1.9 14 Z" fill="#0aaef0"/><path d="M3.1 14.2 L10 12.2 L17.8 14 V16.6 L9.6 19.7 L3.1 17.6 Z" fill="#dadada"/><path d="M10 12.2 L17.8 14 V16.6 L9.6 19.2 L9.4 16.6 L3.1 14.2 Z" fill="#e8e8e8"/><path d="M3.3 14.5 L9.3 16.7 V19.3 L3.3 17.2 Z" fill="#3a3a3a"/><path d="M9.4 16.6 L17.8 14 V16.6 L9.6 19.6 Z" fill="#c4c4c4"/><rect x="7.6" y="17" width="1.7" height="1.1" fill="#2fb52f"/></svg>
<svg class="r" style="left:394px;top:419px" width="22" height="22" viewBox="0 0 22 22"><rect x="3.3" y="8.4" width="13.7" height="7.2" fill="#5a94e0" stroke="#9aa4ad" stroke-width="0.8"/><path d="M8.5 7.5 C8.8 5.5 10.5 5 13.9 5.1 L12 7.5 L11.5 9.8 H13 L9.6 13.7 L7.2 9.8 H8.6 Z" fill="#23d84a"/></svg>
<div class="r" style="left:351px;top:554px;width:1568px;height:42px;background:#f7f7f7;"></div>
<div class="r" style="left:351px;top:596px;width:350px;height:325px;background:#fff;"></div>
<div class="r" style="left:702px;top:596px;width:1212px;height:320px;background:#fff;"></div>
<div class="r" style="left:352px;top:595px;width:1562px;height:1px;background:#a0a0a0;"></div>
<div class="r" style="left:701px;top:566px;width:1px;height:355px;background:#c8c8c8;"></div>
<div class="t" id="t62" style="left:356.09px;top:572px;font-size:15.7px;color:#6d6d6d;font-weight:normal;letter-spacing:-0.336px;">Package Content</div>
<div class="t" id="t63" style="left:705.29px;top:572px;font-size:15.7px;color:#6d6d6d;font-weight:normal;letter-spacing:0.167px;">Name</div>
<div class="r" style="left:1068px;top:568px;width:1px;height:25px;background:#a0a0a0;"></div>
<div class="t" id="t64" style="left:1073.00px;top:572px;font-size:15.7px;color:#6d6d6d;font-weight:normal;letter-spacing:0.158px;">Date Modified</div>
<div class="r" style="left:1267px;top:568px;width:1px;height:25px;background:#a0a0a0;"></div>
<div class="t" id="t65" style="left:1271.68px;top:572px;font-size:15.7px;color:#6d6d6d;font-weight:normal;letter-spacing:-0.767px;">Size</div>
<div class="r" style="left:1462px;top:568px;width:1px;height:25px;background:#a0a0a0;"></div>
<div class="t" id="t66" style="left:1466.38px;top:572px;font-size:15.7px;color:#6d6d6d;font-weight:normal;letter-spacing:-0.173px;">Date Created</div>
<div class="r" style="left:1660px;top:568px;width:1px;height:25px;background:#a0a0a0;"></div>
<div class="t" id="t67" style="left:1665.79px;top:572px;font-size:15.7px;color:#6d6d6d;font-weight:normal;letter-spacing:-0.500px;">Type</div>
<div class="r" style="left:1892px;top:568px;width:1px;height:25px;background:#a0a0a0;"></div>
<div class="r" style="left:352px;top:625px;width:349px;height:29px;background:#d4e0f1;"></div>
<svg class="r" style="left:356.5px;top:608px" width="12" height="8" viewBox="0 0 12 8"><path d="M0.7 0.8 L6 6.1 L11.3 0.8" fill="none" stroke="#3a3a3a" stroke-width="1.5"/></svg>
<svg class="r" style="left:375px;top:602px" width="18" height="16" viewBox="0 0 18 16"><rect x="0.9" y="0.9" width="16" height="11.2" rx="1" fill="#fff" stroke="#666" stroke-width="1.8"/><rect x="4.5" y="12.5" width="8.5" height="2.6" fill="#666"/></svg>
<div class="t" id="t68" style="left:399.18px;top:603px;font-size:15.5px;color:#444;font-weight:normal;letter-spacing:-0.300px;">Package Content</div>
<svg class="r" style="left:379px;top:637px" width="12" height="8" viewBox="0 0 12 8"><path d="M0.7 0.8 L6 6.1 L11.3 0.8" fill="none" stroke="#3a3a3a" stroke-width="1.5"/></svg>
<svg class="r" style="left:398px;top:630px" width="11" height="16" viewBox="0 0 11 16"><path d="M0.5 0.5 H10.5 V12.5 H3 V15.3 L0.5 13.5 Z" fill="#f5d26e"/><path d="M0.5 0.5 L3 2 V15.3 L0.5 13.5 Z" fill="#fbe49a"/></svg>
<div class="t" id="t69" style="left:421.08px;top:632px;font-size:15.5px;color:#444;font-weight:normal;letter-spacing:0.160px;">7-Zip 19.00</div>
<svg class="r" style="left:420px;top:659px" width="11" height="16" viewBox="0 0 11 16"><path d="M0.5 0.5 H10.5 V12.5 H3 V15.3 L0.5 13.5 Z" fill="#f5d26e"/><path d="M0.5 0.5 L3 2 V15.3 L0.5 13.5 Z" fill="#fbe49a"/></svg>
<div class="t" id="t70" style="left:442.88px;top:661px;font-size:15.5px;color:#444;font-weight:normal;letter-spacing:-0.127px;">AppxMetadata</div>
<svg class="r" style="left:420px;top:688px" width="11" height="16" viewBox="0 0 11 16"><path d="M0.5 0.5 H10.5 V12.5 H3 V15.3 L0.5 13.5 Z" fill="#f5d26e"/><path d="M0.5 0.5 L3 2 V15.3 L0.5 13.5 Z" fill="#fbe49a"/></svg>
<div class="t" id="t71" style="left:442.88px;top:690px;font-size:15.5px;color:#444;font-weight:normal;letter-spacing:-0.540px;">Assets</div>
<svg class="r" style="left:403px;top:720px" width="8" height="12" viewBox="0 0 8 12"><path d="M0.8 0.7 L6.1 6 L0.8 11.3" fill="none" stroke="#3a3a3a" stroke-width="1.5"/></svg>
<svg class="r" style="left:420px;top:717px" width="11" height="16" viewBox="0 0 11 16"><path d="M0.5 0.5 H10.5 V12.5 H3 V15.3 L0.5 13.5 Z" fill="#f5d26e"/><path d="M0.5 0.5 L3 2 V15.3 L0.5 13.5 Z" fill="#fbe49a"/></svg>
<div class="t" id="t72" style="left:442.88px;top:719px;font-size:15.5px;color:#444;font-weight:normal;letter-spacing:-1.950px;">VFS</div>
<div class="r" style="left:702px;top:683px;width:1192px;height:29px;background:#e5e5e5;"></div>
<svg class="r" style="left:726px;top:601px" width="11" height="16" viewBox="0 0 11 16"><path d="M0.5 0.5 H10.5 V12.5 H3 V15.3 L0.5 13.5 Z" fill="#f5d26e"/><path d="M0.5 0.5 L3 2 V15.3 L0.5 13.5 Z" fill="#fbe49a"/></svg>
<div class="t" id="t73" style="left:749.79px;top:603px;font-size:15.5px;color:#444;font-weight:normal;letter-spacing:-0.200px;">AppxMetadata</div>
<div class="t" id="t74" style="left:1073.18px;top:603px;font-size:15.5px;color:#444;font-weight:normal;letter-spacing:0.675px;">2/13/2023</div>
<div class="t" id="t75" style="left:1467.00px;top:603px;font-size:15.5px;color:#444;font-weight:normal;letter-spacing:0.488px;">2/13/2023</div>
<div class="t" id="t76" style="left:1663.88px;top:603px;font-size:15.5px;color:#444;font-weight:normal;letter-spacing:-0.050px;">File Folder</div>
<svg class="r" style="left:726px;top:630px" width="11" height="16" viewBox="0 0 11 16"><path d="M0.5 0.5 H10.5 V12.5 H3 V15.3 L0.5 13.5 Z" fill="#f5d26e"/><path d="M0.5 0.5 L3 2 V15.3 L0.5 13.5 Z" fill="#fbe49a"/></svg>
<div class="t" id="t77" style="left:749.79px;top:632px;font-size:15.5px;color:#444;font-weight:normal;letter-spacing:-0.880px;">Assets</div>
<div class="t" id="t78" style="left:1073.18px;top:632px;font-size:15.5px;color:#444;font-weight:normal;letter-spacing:0.675px;">2/13/2023</div>
<div class="t" id="t79" style="left:1467.00px;top:632px;font-size:15.5px;color:#444;font-weight:normal;letter-spacing:0.488px;">2/13/2023</div>
<div class="t" id="t80" style="left:1663.88px;top:632px;font-size:15.5px;color:#444;font-weight:normal;letter-spacing:-0.050px;">File Folder</div>
<svg class="r" style="left:726px;top:659px" width="11" height="16" viewBox="0 0 11 16"><path d="M0.5 0.5 H10.5 V12.5 H3 V15.3 L0.5 13.5 Z" fill="#f5d26e"/><path d="M0.5 0.5 L3 2 V15.3 L0.5 13.5 Z" fill="#fbe49a"/></svg>
<div class="t" id="t81" style="left:749.79px;top:661px;font-size:15.5px;color:#444;font-weight:normal;letter-spacing:-2.400px;">VFS</div>
<div class="t" id="t82" style="left:1073.18px;top:661px;font-size:15.5px;color:#444;font-weight:normal;letter-spacing:0.675px;">2/13/2023</div>
<div class="t" id="t83" style="left:1467.00px;top:661px;font-size:15.5px;color:#444;font-weight:normal;letter-spacing:0.488px;">2/13/2023</div>
<div class="t" id="t84" style="left:1663.88px;top:661px;font-size:15.5px;color:#444;font-weight:normal;letter-spacing:-0.050px;">File Folder</div>
<svg class="r" style="left:725px;top:687px" width="15" height="16" viewBox="0 0 15 16"><path d="M1 1 H10.5 L14 4.5 V15 H1 Z" fill="#fafafa" stroke="#9a9a9a" stroke-width="1"/><path d="M14 4.5 V15 H1" fill="none" stroke="#555" stroke-width="1.3"/><circle cx="7.3" cy="6.5" r="3" fill="#1f8fe0"/><path d="M5 5 C6 4 7 6.5 8.5 7.5 C7.5 9 6 9 5 8" fill="#2fd02f"/><rect x="3.5" y="11" width="7" height="1.8" fill="#9b9bc0"/></svg>
<div class="t" id="t85" style="left:749.79px;top:690px;font-size:15.5px;color:#444;font-weight:normal;letter-spacing:-0.367px;">AppxBlockMap.xml</div>
<div class="t" id="t86" style="left:1071.68px;top:690px;font-size:15.5px;color:#444;font-weight:normal;letter-spacing:0.863px;">2/13/2023</div>
<div class="t" id="t87" style="left:859.5px;width:600px;text-align:right;top:690px;font-size:15.5px;color:#444;font-weight:normal;">41243</div>
<div class="t" id="t88" style="left:1466.00px;top:690px;font-size:15.5px;color:#444;font-weight:normal;letter-spacing:0.613px;">2/13/2023</div>
<div class="t" id="t89" style="left:1663.88px;top:690px;font-size:15.5px;color:#444;font-weight:normal;letter-spacing:0.233px;">File</div>
<svg class="r" style="left:725px;top:716px" width="15" height="16" viewBox="0 0 15 16"><path d="M1 1 H10.5 L14 4.5 V15 H1 Z" fill="#fafafa" stroke="#9a9a9a" stroke-width="1"/><path d="M14 4.5 V15 H1" fill="none" stroke="#555" stroke-width="1.3"/><circle cx="7.3" cy="6.5" r="3" fill="#1f8fe0"/><path d="M5 5 C6 4 7 6.5 8.5 7.5 C7.5 9 6 9 5 8" fill="#2fd02f"/><rect x="3.5" y="11" width="7" height="1.8" fill="#9b9bc0"/></svg>
<div class="t" id="t90" style="left:749px;top:719px;font-size:15.5px;color:#444;font-weight:normal;">AppxManifest.xml</div>
<div class="t" id="t91" style="left:1073.18px;top:719px;font-size:15.5px;color:#444;font-weight:normal;letter-spacing:0.675px;">2/13/2023</div>
<div class="t" id="t92" style="left:859.5px;width:600px;text-align:right;top:719px;font-size:15.5px;color:#444;font-weight:normal;">3681</div>
<div class="t" id="t93" style="left:1467.00px;top:719px;font-size:15.5px;color:#444;font-weight:normal;letter-spacing:0.488px;">2/13/2023</div>
<div class="t" id="t94" style="left:1663.88px;top:719px;font-size:15.5px;color:#444;font-weight:normal;letter-spacing:0.233px;">File</div>
<svg class="r" style="left:726px;top:746px" width="13" height="16" viewBox="0 0 13 16"><path d="M0.8 0.8 H9.8 L12.2 3.2 V14.8 H0.8 Z" fill="#fbfbfb" stroke="#8a8a8a" stroke-width="1.3"/></svg>
<div class="t" id="t95" style="left:749.79px;top:748px;font-size:15.5px;color:#444;font-weight:normal;letter-spacing:-0.112px;">AppxSignature.p7x</div>
<div class="t" id="t96" style="left:1073.18px;top:748px;font-size:15.5px;color:#444;font-weight:normal;letter-spacing:0.675px;">2/13/2023</div>
<div class="t" id="t97" style="left:859.5px;width:600px;text-align:right;top:748px;font-size:15.5px;color:#444;font-weight:normal;">1511</div>
<div class="t" id="t98" style="left:1467.00px;top:748px;font-size:15.5px;color:#444;font-weight:normal;letter-spacing:0.488px;">2/13/2023</div>
<div class="t" id="t99" style="left:1663.88px;top:748px;font-size:15.5px;color:#444;font-weight:normal;letter-spacing:0.233px;">File</div>
<svg class="r" style="left:725px;top:774px" width="15" height="16" viewBox="0 0 15 16"><path d="M1 1 H10.5 L14 4.5 V15 H1 Z" fill="#fafafa" stroke="#9a9a9a" stroke-width="1"/><path d="M14 4.5 V15 H1" fill="none" stroke="#555" stroke-width="1.3"/><circle cx="7.3" cy="6.5" r="3" fill="#1f8fe0"/><path d="M5 5 C6 4 7 6.5 8.5 7.5 C7.5 9 6 9 5 8" fill="#2fd02f"/><rect x="3.5" y="11" width="7" height="1.8" fill="#9b9bc0"/></svg>
<div class="t" id="t100" style="left:749.29px;top:777px;font-size:15.5px;color:#444;font-weight:normal;letter-spacing:0.200px;">priconfig.xml</div>
<div class="t" id="t101" style="left:1073.18px;top:777px;font-size:15.5px;color:#444;font-weight:normal;letter-spacing:0.675px;">2/13/2023</div>
<div class="t" id="t102" style="left:859.5px;width:600px;text-align:right;top:777px;font-size:15.5px;color:#444;font-weight:normal;">1480</div>
<div class="t" id="t103" style="left:1467.00px;top:777px;font-size:15.5px;color:#444;font-weight:normal;letter-spacing:0.488px;">2/13/2023</div>
<div class="t" id="t104" style="left:1663.88px;top:777px;font-size:15.5px;color:#444;font-weight:normal;letter-spacing:0.233px;">File</div>
<svg class="r" style="left:726px;top:804px" width="13" height="16" viewBox="0 0 13 16"><path d="M0.8 0.8 H9.8 L12.2 3.2 V14.8 H0.8 Z" fill="#fbfbfb" stroke="#8a8a8a" stroke-width="1.3"/></svg>
<div class="t" id="t105" style="left:748.79px;top:806px;font-size:15.5px;color:#444;font-weight:normal;letter-spacing:0.082px;">Registry.dat</div>
<div class="t" id="t106" style="left:1073.18px;top:806px;font-size:15.5px;color:#444;font-weight:normal;letter-spacing:0.675px;">2/13/2023</div>
<div class="t" id="t107" style="left:859.5px;width:600px;text-align:right;top:806px;font-size:15.5px;color:#444;font-weight:normal;">28672</div>
<div class="t" id="t108" style="left:1467.00px;top:806px;font-size:15.5px;color:#444;font-weight:normal;letter-spacing:0.488px;">2/13/2023</div>
<div class="t" id="t109" style="left:1663.88px;top:806px;font-size:15.5px;color:#444;font-weight:normal;letter-spacing:0.233px;">File</div>
<svg class="r" style="left:726px;top:833px" width="13" height="16" viewBox="0 0 13 16"><path d="M0.8 0.8 H9.8 L12.2 3.2 V14.8 H0.8 Z" fill="#fbfbfb" stroke="#8a8a8a" stroke-width="1.3"/></svg>
<div class="t" id="t110" style="left:749.29px;top:835px;font-size:15.5px;color:#444;font-weight:normal;letter-spacing:-0.025px;">resources.pri</div>
<div class="t" id="t111" style="left:1073.18px;top:835px;font-size:15.5px;color:#444;font-weight:normal;letter-spacing:0.675px;">2/13/2023</div>
<div class="t" id="t112" style="left:859.5px;width:600px;text-align:right;top:835px;font-size:15.5px;color:#444;font-weight:normal;">10408</div>
<div class="t" id="t113" style="left:1467.00px;top:835px;font-size:15.5px;color:#444;font-weight:normal;letter-spacing:0.488px;">2/13/2023</div>
<div class="t" id="t114" style="left:1663.88px;top:835px;font-size:15.5px;color:#444;font-weight:normal;letter-spacing:0.233px;">File</div>
<svg class="r" style="left:726px;top:862px" width="13" height="16" viewBox="0 0 13 16"><path d="M0.8 0.8 H9.8 L12.2 3.2 V14.8 H0.8 Z" fill="#fbfbfb" stroke="#8a8a8a" stroke-width="1.3"/></svg>
<div class="t" id="t115" style="left:749.29px;top:864px;font-size:15.5px;color:#444;font-weight:normal;letter-spacing:-0.095px;">resources.scale-125.pri</div>
<div class="t" id="t116" style="left:1073.18px;top:864px;font-size:15.5px;color:#444;font-weight:normal;letter-spacing:0.675px;">2/13/2023</div>
<div class="t" id="t117" style="left:859.5px;width:600px;text-align:right;top:864px;font-size:15.5px;color:#444;font-weight:normal;">4408</div>
<div class="t" id="t118" style="left:1467.00px;top:864px;font-size:15.5px;color:#444;font-weight:normal;letter-spacing:0.488px;">2/13/2023</div>
<div class="t" id="t119" style="left:1663.88px;top:864px;font-size:15.5px;color:#444;font-weight:normal;letter-spacing:0.233px;">File</div>
<svg class="r" style="left:726px;top:891px" width="13" height="16" viewBox="0 0 13 16"><path d="M0.8 0.8 H9.8 L12.2 3.2 V14.8 H0.8 Z" fill="#fbfbfb" stroke="#8a8a8a" stroke-width="1.3"/></svg>
<div class="t" id="t120" style="left:749.29px;top:893px;font-size:15.5px;color:#444;font-weight:normal;letter-spacing:-0.095px;">resources.scale-150.pri</div>
<div class="t" id="t121" style="left:1073.18px;top:893px;font-size:15.5px;color:#444;font-weight:normal;letter-spacing:0.675px;">2/13/2023</div>
<div class="t" id="t122" style="left:859.5px;width:600px;text-align:right;top:893px;font-size:15.5px;color:#444;font-weight:normal;">4408</div>
<div class="t" id="t123" style="left:1467.00px;top:893px;font-size:15.5px;color:#444;font-weight:normal;letter-spacing:0.488px;">2/13/2023</div>
<div class="t" id="t124" style="left:1663.88px;top:893px;font-size:15.5px;color:#444;font-weight:normal;letter-spacing:0.233px;">File</div>
<div class="r" style="left:702px;top:916px;width:1217px;height:5px;background:#f7f7f7;"></div>
<div class="r" style="left:1914px;top:596px;width:5px;height:325px;background:#f7f7f7;"></div>
<div class="r" style="left:1893px;top:851px;width:20px;height:44px;background:#f0f0f0;"></div>
<div class="r" style="left:1894px;top:597px;width:17px;height:253px;background:#fff;border:1px solid #a6a6a6"></div>
<div class="r" style="left:1894px;top:616px;width:19px;height:2px;background:#a6a6a6;"></div>
<div class="r" style="left:1894px;top:895px;width:17px;height:18px;background:#fff;border:1px solid #a6a6a6"></div>
<svg class="r" style="left:1899px;top:603px" width="9" height="6" viewBox="0 0 9 6"><path d="M0.5 5 L4.5 0.5 L8.5 5 Z" fill="#7d7d7d"/></svg>
<svg class="r" style="left:1899px;top:903px" width="9" height="6" viewBox="0 0 9 6"><path d="M0.5 0.5 L4.5 5 L8.5 0.5 Z" fill="#7d7d7d"/></svg>
<div class="r" style="left:800px;top:701px;width:115px;height:32px;background:#fff;border:1px solid #d9d9d9;box-shadow:1px 2px 3px rgba(0,0,0,0.12)"></div>
<div class="r" style="left:809px;top:699px;width:95px;height:31px;border:3px solid #fd7a1f"></div>
<div class="t" id="t125" style="left:841.19px;top:709px;font-size:13px;color:#333;font-weight:normal;letter-spacing:0.120px;">Delete</div>
</body></html>
